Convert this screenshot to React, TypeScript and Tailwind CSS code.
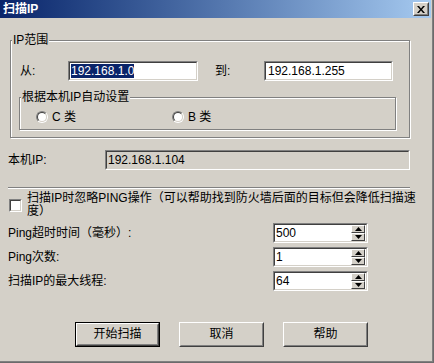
import React from "react";

function Edit({
  className,
  children,
  disabled,
}: {
  className: string;
  children?: React.ReactNode;
  disabled?: boolean;
}) {
  return (
    <div
      className={`border border-t-[#808080] border-l-[#808080] border-r-white border-b-white ${className}`}
    >
      <div
        className={`h-full flex items-center border border-t-[#404040] border-l-[#404040] border-r-[#d4d0c8] border-b-[#d4d0c8] ${
          disabled ? "bg-[#d4d0c8]" : "bg-white"
        }`}
      >
        {children}
      </div>
    </div>
  );
}

function SpinHalf({ up }: { up?: boolean }) {
  return (
    <div className="flex-1 border border-t-white border-l-white border-r-[#404040] border-b-[#404040] bg-[#d4d0c8] flex items-center justify-center">
      <svg width="7" height="4" viewBox="0 0 7 4">
        {up ? (
          <polygon points="3.5,0 7,4 0,4" fill="#000" />
        ) : (
          <polygon points="0,0 7,0 3.5,4" fill="#000" />
        )}
      </svg>
    </div>
  );
}

function Spin({ value }: { value: string }) {
  return (
    <Edit className="w-[95px] h-[20px]">
      <span className="flex-1 pl-[1px] leading-[14px]">{value}</span>
      <div className="w-[14px] h-full flex flex-col mr-[1px]">
        <SpinHalf up />
        <SpinHalf />
      </div>
    </Edit>
  );
}

function Radio({ label }: { label: string }) {
  return (
    <div className="w-[136px] flex items-center">
      <div className="w-[12px] h-[12px] rounded-full border border-t-[#808080] border-l-[#808080] border-r-white border-b-white">
        <div className="w-full h-full rounded-full bg-white border border-t-[#404040] border-l-[#404040] border-r-[#d4d0c8] border-b-[#d4d0c8]" />
      </div>
      <span className="ml-[4px] leading-[13px]">{label}</span>
    </div>
  );
}

function Button({ label, isDefault }: { label: string; isDefault?: boolean }) {
  return (
    <div
      className={`w-[85px] h-[25px] ${
        isDefault ? "border border-black" : ""
      }`}
    >
      <div className="h-full border border-t-white border-l-white border-r-[#404040] border-b-[#404040]">
        <div className="h-full flex items-center justify-center border border-t-[#d4d0c8] border-l-[#d4d0c8] border-r-[#808080] border-b-[#808080] leading-[13px]">
          {label}
        </div>
      </div>
    </div>
  );
}

export default function App() {
  return (
    <div className="w-[434px] h-[363px] bg-[#d4d0c8] text-black text-[12px] font-['Liberation_Sans','Noto_Sans_CJK_SC',sans-serif] border-r border-b border-[#6b6b6b] overflow-hidden">
      <div className="h-full flex flex-col border-r border-b border-[#808080]">
        {/* Title bar */}
        <div className="h-[18px] flex items-center justify-between bg-gradient-to-r from-[#0a246a] to-[#a6caf0] mr-[1px]">
          <span className="pl-[3px] text-white font-bold leading-[14px]">扫描IP</span>
          <div className="w-[16px] h-[14px] mr-[2px] border border-t-white border-l-white border-r-[#404040] border-b-[#404040] bg-[#d4d0c8]">
            <div className="h-full flex items-center justify-center border border-t-[#d4d0c8] border-l-[#d4d0c8] border-r-[#808080] border-b-[#808080]">
              <svg width="8" height="7" viewBox="0 0 8 7">
                <path d="M0 0h2l2 2.5L6 0h2L5 3.5 8 7H6L4 4.5 2 7H0l3-3.5z" fill="#000" />
              </svg>
            </div>
          </div>
        </div>

        {/* IP range group */}
        <fieldset className="mt-[16px] ml-[10px] w-[400px] border border-[#808080] shadow-[inset_1px_1px_0_#fff,1px_1px_0_#fff] pb-[7px]">
          <legend className="ml-[1px] px-[1px] bg-[#d4d0c8] leading-[13px]">IP范围</legend>
          <div className="mt-[14px] pl-[9px] flex items-center">
            <span className="w-[48px] leading-[13px]">从:</span>
            <Edit className="w-[130px] h-[20px]">
              <span className="ml-[1px] bg-[#0a246a] text-white leading-[14px]">192.168.1.0</span>
            </Edit>
            <span className="ml-[17px] w-[49px] leading-[13px]">到:</span>
            <Edit className="w-[129px] h-[20px]">
              <span className="pl-[2px] leading-[14px]">192.168.1.255</span>
            </Edit>
          </div>

          <fieldset className="mt-[10px] ml-[8px] w-[377px] border border-[#808080] shadow-[inset_1px_1px_0_#fff,1px_1px_0_#fff] pb-[5px]">
            <legend className="ml-[1px] px-[1px] bg-[#d4d0c8] leading-[13px]">根据本机IP自动设置</legend>
            <div className="mt-[6px] h-[14px] pl-[16px] flex items-center">
              <Radio label="C 类" />
              <Radio label="B 类" />
            </div>
          </fieldset>
        </fieldset>

        {/* Local IP */}
        <div className="mt-[12px] pl-[8px] flex items-center">
          <span className="w-[97px] leading-[13px]">本机IP:</span>
          <Edit className="w-[305px] h-[20px]" disabled>
            <span className="pl-[1px] leading-[14px]">192.168.1.104</span>
          </Edit>
        </div>

        {/* Separator */}
        <div className="mt-[17px] ml-[8px] w-[402px] h-[2px] border-t border-t-[#808080] border-b border-b-white" />

        {/* Checkbox */}
        <div className="mt-[3px] pl-[9px] flex items-center">
          <div className="w-[13px] h-[13px] border border-t-[#808080] border-l-[#808080] border-r-white border-b-white">
            <div className="w-full h-full bg-white border border-t-[#404040] border-l-[#404040] border-r-[#d4d0c8] border-b-[#d4d0c8]" />
          </div>
          <div className="ml-[5px] leading-[13px] whitespace-nowrap">
            扫描IP时忽略PING操作（可以帮助找到防火墙后面的目标但会降低扫描速
            <br />
            度）
          </div>
        </div>

        {/* Ping rows */}
        <div className="mt-[5px] flex flex-col gap-[4px]">
          <div className="pl-[8px] flex items-center">
            <span className="w-[265px] leading-[13px]">Ping超时时间（毫秒）:</span>
            <Spin value="500" />
          </div>
          <div className="pl-[8px] flex items-center">
            <span className="w-[265px] leading-[13px]">Ping次数:</span>
            <Spin value="1" />
          </div>
          <div className="pl-[8px] flex items-center">
            <span className="w-[265px] leading-[13px]">扫描IP的最大线程:</span>
            <Spin value="64" />
          </div>
        </div>

        {/* Buttons */}
        <div className="mt-[31px] pl-[75px] flex gap-[19px]">
          <Button label="开始扫描" isDefault />
          <Button label="取消" />
          <Button label="帮助" />
        </div>
      </div>
    </div>
  );
}
